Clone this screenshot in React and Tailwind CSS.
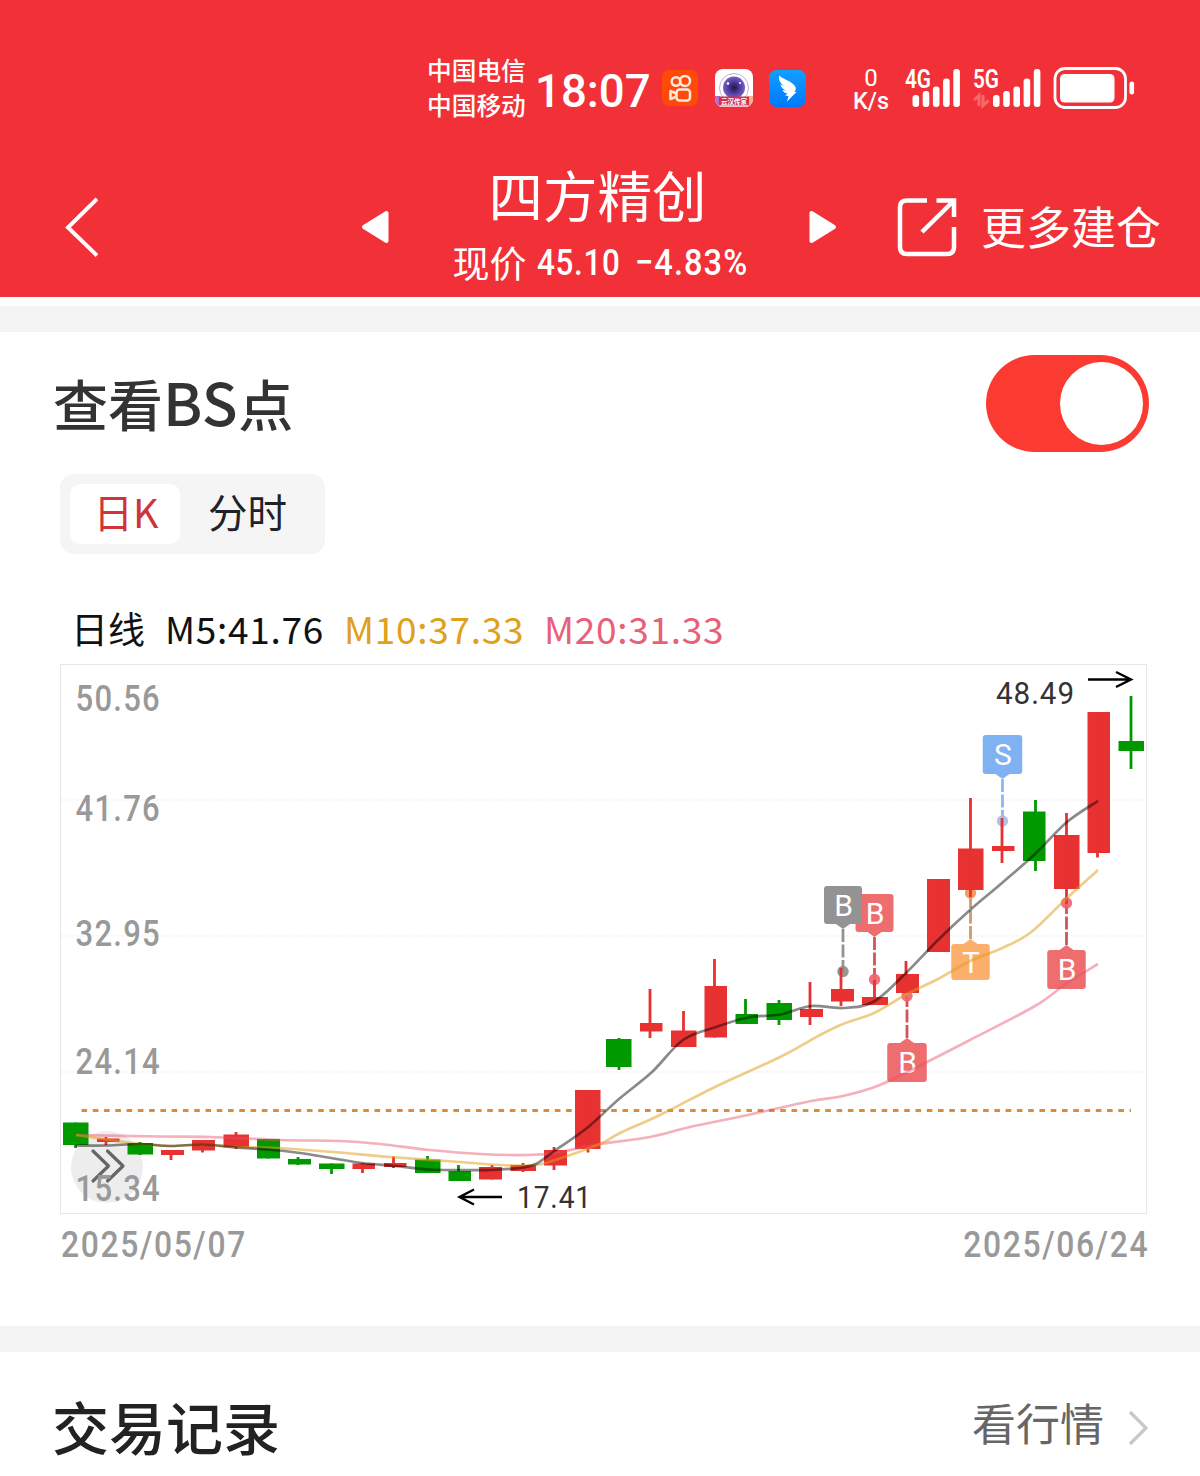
import clsx from "clsx";

const RED = "#e83131";
const GREEN = "#009a00";

// [body left, body width, open/close top, open/close bottom, high, low, wick x, up]
const candles = [
  [63, 25.5, 1122.5, 1145, 1122.5, 1148, 75.5, false],
  [97, 22.5, 1138.5, 1142, 1137, 1145, 106, true],
  [127.5, 25.5, 1143, 1154.5, 1142, 1155, 140, false],
  [161, 23, 1150, 1155, 1150, 1160, 171, true],
  [192, 23, 1140, 1150.5, 1140, 1152.5, 202.5, true],
  [223.5, 25.5, 1134.5, 1147, 1132, 1149, 236, true],
  [257, 23, 1139, 1158.5, 1139, 1158.5, 268, false],
  [288, 23, 1159, 1164.5, 1157, 1165, 298, false],
  [319, 25.5, 1163.5, 1169, 1163.5, 1174, 331.5, false],
  [352.5, 22.5, 1163.5, 1169, 1163, 1173, 362.5, true],
  [384, 22.5, 1163, 1167, 1156.5, 1168, 393.5, true],
  [415, 25.5, 1159.5, 1173, 1156, 1173, 427.5, false],
  [448.5, 22.5, 1171, 1181, 1165, 1181, 458.5, false],
  [479, 23, 1167, 1179.5, 1165, 1179.5, 492, true],
  [510.5, 25.5, 1165, 1171, 1163, 1172, 523, true],
  [544, 23, 1150, 1165.5, 1147, 1170, 554, true],
  [575, 25.5, 1090, 1149, 1090, 1152.5, 588, true],
  [606, 25.5, 1039, 1067, 1038, 1070, 619, false],
  [640, 22.5, 1023, 1031.5, 989, 1038, 650, true],
  [671, 25.5, 1030.5, 1047, 1011, 1047, 683.5, true],
  [704.5, 22.5, 986, 1037.5, 959, 1037.5, 714.5, true],
  [735.5, 22.5, 1014, 1024, 999, 1024, 745.5, false],
  [766.5, 25.5, 1003, 1020, 1000, 1025, 779, false],
  [800, 23, 1009, 1017, 982, 1025, 810, true],
  [831, 23, 989, 1001.5, 968, 1006, 841, true],
  [862, 26, 997, 1005, 980, 1005, 874.5, true],
  [896, 23, 974, 993, 961, 993, 906, true],
  [927, 23, 879, 952, 879, 952, 938, true],
  [958, 25.5, 848.5, 890, 798, 897, 970.5, true],
  [992, 22.5, 846, 851, 818, 863, 1002, true],
  [1023, 22.5, 811.5, 861, 800, 871, 1035.5, false],
  [1054, 25.5, 835, 889, 813, 904, 1066.5, true],
  [1087.5, 22.5, 712, 853, 712, 857.5, 1097.5, true],
  [1118.5, 25.5, 741, 751, 696, 769, 1131, false],
];

const ma5 = [
  [76, 1145.5], [107, 1145.5], [140, 1144], [171, 1146], [203, 1144.5], [236, 1147.5],
  [268, 1149.5], [300, 1153], [331, 1158], [362, 1163], [395, 1166], [428, 1169.5],
  [460, 1170], [492, 1170], [523, 1167.5], [537, 1163.5], [555, 1150.5], [587, 1128],
  [619, 1099], [652, 1072], [683, 1040], [716, 1027], [748, 1017.5], [780, 1014.5],
  [811, 1006], [843, 1008], [874, 1001.5], [907, 972], [938, 940], [970, 910],
  [1002, 883], [1035, 854], [1067, 822], [1098, 801],
];

const ma10 = [
  [76, 1135], [107, 1139.5], [140, 1144], [171, 1146], [203, 1144.5], [236, 1147],
  [268, 1147.5], [300, 1149.5], [340, 1152.5], [390, 1157], [460, 1162], [500, 1165],
  [535, 1165], [555, 1160], [600, 1144], [620, 1133], [660, 1115], [715, 1087],
  [780, 1057], [820, 1035], [843, 1024], [874, 1013], [907, 994], [938, 979],
  [970, 961], [1000, 949], [1030, 933], [1067, 898], [1098, 870],
];

const ma20 = [
  [76, 1135], [160, 1136.5], [210, 1137], [280, 1140], [340, 1141], [380, 1144],
  [430, 1150], [480, 1154], [525, 1155], [555, 1153], [600, 1144], [650, 1137],
  [690, 1127], [748, 1115], [811, 1101], [843, 1096], [880, 1085], [927, 1062],
  [970, 1040], [1035, 1006], [1067, 983], [1098, 964],
];

const pins = [
  { x: 874.5, top: 894, w: 38, h: 38, dot: 979.5, label: "B", color: "#ee6d6f", stem: "#d0555a", dotColor: "#f0606a" },
  { x: 843, top: 886, w: 38, h: 38, dot: 971.5, label: "B", color: "#939393", stem: "#939393", dotColor: "#8c8c8c" },
  { x: 907, top: 1043, w: 39.5, h: 39, dot: 996, label: "B", color: "#ee6d6f", stem: "#d0555a", dotColor: "#f0606a" },
  { x: 970.5, top: 944, w: 38.5, h: 36, dot: 893, label: "T", color: "#fcae6b", stem: "#cf9a70", dotColor: "#f5924c" },
  { x: 1066.5, top: 950, w: 38.5, h: 39, dot: 903, label: "B", color: "#ee6d6f", stem: "#d0555a", dotColor: "#f0606a" },
  { x: 1002.5, top: 735, w: 39.5, h: 39, dot: 821, label: "S", color: "#7fb2f2", stem: "#8cb8ee", dotColor: "#a4bde9" },
];

const smooth = (pts) => {
  let d = `M${pts[0][0]} ${pts[0][1]}`;
  for (let i = 0; i < pts.length - 1; i++) {
    const p0 = pts[i - 1] || pts[i];
    const p1 = pts[i];
    const p2 = pts[i + 1];
    const p3 = pts[i + 2] || p2;
    d += ` C${p1[0] + (p2[0] - p0[0]) / 6} ${p1[1] + (p2[1] - p0[1]) / 6} ${
      p2[0] - (p3[0] - p1[0]) / 6
    } ${p2[1] - (p3[1] - p1[1]) / 6} ${p2[0]} ${p2[1]}`;
  }
  return d;
};

const Pin = ({ x, top, w, h, dot, label, color, stem, dotColor }) => {
  const below = dot < top;
  const edge = below ? top : top + h;
  const tip = below ? top - 5 : top + h + 5;
  return (
    <g>
      <line x1={x} x2={x} y1={tip} y2={dot} stroke={stem} strokeWidth="2.8" strokeDasharray="13 2.5" />
      <circle cx={x} cy={dot} r="5.7" fill={dotColor} opacity="0.9" />
      <path d={`M${x - 7} ${edge}L${x} ${tip}L${x + 7} ${edge}Z`} fill={color} />
      <rect x={x - w / 2} y={top} width={w} height={h} rx="3" fill={color} />
      <text
        x={x + 0.5}
        y={top + h / 2 + 10.5}
        textAnchor="middle"
        fontSize="30"
        fill="#fff"
        className="font-['Roboto',sans-serif]"
      >
        {label}
      </text>
    </g>
  );
};

const Chart = () => (
  <svg viewBox="60 664 1088 551" className="block w-[1088px] h-[551px]">
    <rect x="60.5" y="664.5" width="1086" height="549" fill="#fff" stroke="#e6e6e6" />
    {[800, 936, 1072].map((y) => (
      <line key={y} x1="61" x2="1146" y1={y} y2={y} stroke="#f5f5f5" strokeWidth="1.5" strokeDasharray="3 2" />
    ))}
    <circle cx="107" cy="1167" r="36" fill="#ededed" />
    <line x1="81.5" x2="1131" y1="1110.5" y2="1110.5" stroke="#dc8b3c" strokeWidth="3" strokeDasharray="5.6 5.67" />

    {pins.map((pin) => (
      <Pin key={pin.x} {...pin} />
    ))}

    {candles.map(([x, w, top, bottom, high, low, cx, up], i) => (
      <g key={i} fill={up ? RED : GREEN}>
        <rect x={x} y={top} width={w} height={bottom - top} />
        <rect x={cx - 1.4} y={high} width="2.8" height={low - high} />
      </g>
    ))}

    <g fill="none" strokeWidth="2.7">
      <path d={smooth(ma20)} stroke="#e8506a" strokeOpacity="0.45" />
      <path d={smooth(ma10)} stroke="#dfa01c" strokeOpacity="0.52" />
      <path d={smooth(ma5)} stroke="#000" strokeOpacity="0.46" />
    </g>

    <g fill="none" stroke="#666" strokeWidth="3.2" strokeLinecap="round" strokeLinejoin="round">
      <path d="M93 1151L108.500 1166L93 1181" />
      <path d="M107.500 1151L123 1166L107.500 1181" />
    </g>

    <g fill="#999" fontSize="37" fontWeight="500" letterSpacing="1.5" className="font-['Roboto',sans-serif]">
      {[
        ["50.56", 711],
        ["41.76", 821],
        ["32.95", 946],
        ["24.14", 1074],
        ["15.34", 1201],
      ].map(([label, y]) => (
        <text key={label} x="75.5" y={y} textLength="85.500" lengthAdjust="spacingAndGlyphs">
          {label}
        </text>
      ))}
    </g>

    <g fill="#333" fontSize="32" letterSpacing="1" className="font-['Roboto',sans-serif]">
      <text x="996" y="704" textLength="79" lengthAdjust="spacingAndGlyphs">48.49</text>
      <text x="517" y="1208" textLength="75" lengthAdjust="spacingAndGlyphs">17.41</text>
    </g>
    <g fill="none" stroke="#000" strokeWidth="2.4">
      <path d="M1088 679.500H1130M1116 672L1131 679.500L1116 687" />
      <path d="M502 1197H460M474 1189.500L459.500 1197L474 1204.500" />
    </g>
  </svg>
);

const Signal = ({ label, data }) => (
  <svg viewBox="0 0 70 44" className="w-[70px] h-11">
    <text
      x="0"
      y="22"
      fontSize="25"
      fontWeight="600"
      fill="#fff"
      textLength="26"
      lengthAdjust="spacingAndGlyphs"
      className="font-['Roboto',sans-serif]"
    >
      {label}
    </text>
    {[12, 16, 20.5, 28.5, 38].map((h, i) => (
      <rect key={h} x={(data ? 20 : 7.5) + i * 10.2} y={41 - h} width="6.6" height={h} rx="3" fill="#fff" />
    ))}
    {data && (
      <path d="M1 34L6 29.500V40M10 29V39.500L15.500 34.500" fill="none" stroke="#fa6a6c" strokeWidth="3" />
    )}
  </svg>
);

const StatusBar = () => (
  <div className="flex h-[140px] pl-[427px] pt-[54px] text-white">
    <div className="-mt-0.5 w-[99px] text-[24.7px] leading-[35px] font-medium whitespace-nowrap">
      <div>中国电信</div>
      <div>中国移动</div>
    </div>
    <div className="ml-[9px] w-[118px] h-[72px] text-[47px] leading-[73px] font-medium font-['Roboto',sans-serif] whitespace-nowrap">
      <span className="block origin-left scale-x-[0.97]">18:07</span>
    </div>

    <svg viewBox="0 0 36 36" className="ml-[9px] mt-4 size-9">
      <rect width="36" height="36" rx="7" fill="#ff4a08" />
      <g fill="none" stroke="#ffe9dc" strokeWidth="2.500">
        <circle cx="14" cy="11.500" r="4.300" />
        <circle cx="23" cy="11" r="5" />
        <rect x="14.500" y="19.500" width="13.500" height="11" rx="3" />
        <path d="M14.500 23.500L8.500 21V29L14.500 26.500" strokeLinejoin="round" />
      </g>
    </svg>

    <svg viewBox="0 0 38 38" className="ml-[17px] mt-[15px] size-[38px]">
      <defs>
        <clipPath id="camera">
          <rect width="38" height="38" rx="8" />
        </clipPath>
        <radialGradient id="lens">
          <stop offset="0" stopColor="#1c1746" />
          <stop offset="0.500" stopColor="#4a3a9c" />
          <stop offset="1" stopColor="#7a5fc4" />
        </radialGradient>
      </defs>
      <g clipPath="url(#camera)">
        <rect width="38" height="38" fill="#fff" />
        <circle cx="19" cy="19" r="14.500" fill="none" stroke="#b9b4d4" strokeWidth="1" />
        <circle cx="19" cy="18.500" r="11" fill="url(#lens)" />
        <circle cx="13" cy="14.500" r="1.300" fill="#fff" />
        <circle cx="25" cy="14" r="1" fill="#fff" />
        <rect y="27" width="5" height="11" fill="#b070c8" />
        <rect x="33" y="27" width="5" height="11" fill="#f3b08c" />
        <rect x="4" y="27.500" width="30" height="9" fill="#d52d50" />
        <rect y="36.500" width="38" height="1.500" fill="#f3c4cc" />
        <text x="19" y="34.500" fontSize="6.500" fontWeight="700" textAnchor="middle" fill="#fff">
          云汉传家
        </text>
      </g>
    </svg>

    <svg viewBox="0 0 37 37" className="ml-4 mt-4 size-[37px]">
      <defs>
        <linearGradient id="wing" x2="0" y2="1">
          <stop offset="0" stopColor="#12a0ff" />
          <stop offset="1" stopColor="#0078fe" />
        </linearGradient>
      </defs>
      <rect width="37" height="37" rx="7.500" fill="url(#wing)" />
      <path
        d="M10 5.500C14 9 22 11 25.500 15.500C27.500 18 27 20 25.500 22H27.500L18 31.500L19.500 26L16 25.500L18.500 23.500C15.500 23 14 21.500 13.500 20L17 20.500C13.500 19 12 17 11.500 14.500L15 16C11 13 9.500 10 10 5.500Z"
        fill="#fff"
      />
    </svg>

    <div className="ml-[45px] mt-[12px] w-10 text-center text-[24px] leading-[24px] font-['Roboto',sans-serif]">
      <div className="h-[23px]">0</div>
      <div className="text-[23.5px] font-medium">K/s</div>
    </div>
    <div className="ml-[14px] mt-3 flex">
      <div className="w-[68px]">
        <Signal label="4G" />
      </div>
      <Signal label="5G" data />
    </div>

    <svg viewBox="0 0 82 42" className="ml-[10px] mt-[13px] w-[82px] h-[42px]">
      <rect x="2" y="1.500" width="70.500" height="39" rx="10" fill="none" stroke="#fff" strokeWidth="2.800" />
      <rect x="7" y="7" width="54.500" height="28.500" rx="4.500" fill="#fff" />
      <rect x="76.500" y="14.500" width="4.600" height="13" rx="2.300" fill="#fff" />
    </svg>
  </div>
);

const Header = () => (
  <header className="h-[297px] bg-[#f23038]">
    <StatusBar />
    <div className="flex h-[157px] text-white">
      <svg viewBox="0 0 34 60" className="ml-16 mt-[57px] w-[34px] h-[60px]">
        <path d="M33 2L4 30.500L33 58.500" fill="none" stroke="#fff" strokeWidth="4" />
      </svg>
      <svg viewBox="0 0 28 34" className="ml-[263px] mt-[70px] w-7 h-[34px]">
        <path d="M3 17L25.500 3V31Z" fill="#fff" stroke="#fff" strokeWidth="4" strokeLinejoin="round" />
      </svg>
      <div className="ml-[51px] w-[320px] pt-[22px] text-center whitespace-nowrap">
        <div className="pr-[5px] text-[54.5px] leading-[64px]">四方精创</div>
        <div className="mt-[9px] flex items-center justify-center text-[37px] leading-[50px]">
          <span>现价</span>
          <span className="ml-2.5 w-[84px]">
            <span className="block origin-left scale-x-[0.85] pt-[3px] text-left font-medium tracking-[0.8px] font-['Roboto',sans-serif]">
              45.10
            </span>
          </span>
          <span className="ml-3.5 w-[113px]">
            <span className="block origin-left scale-x-[0.88] pt-[3px] text-left font-medium tracking-[1.2px] font-['Roboto',sans-serif]">
              −4.83%
            </span>
          </span>
        </div>
      </div>
      <svg viewBox="0 0 28 34" className="ml-[49px] mt-[70px] w-7 h-[34px]">
        <path d="M25 17L2.500 3V31Z" fill="#fff" stroke="#fff" strokeWidth="4" strokeLinejoin="round" />
      </svg>
      <svg viewBox="0 0 60 60" className="ml-[60px] mt-[57px] size-[60px]">
        <g fill="none" stroke="#fff" strokeWidth="4.500">
          <path d="M30 3.500H10Q3 3.500 3 10V50Q3 57 10 57H50Q57 57 57 50V30" />
          <path d="M39.500 3.500H57V20M57 3.500L25 35" />
        </g>
      </svg>
      <div className="ml-6 mt-[54px] text-[45px] leading-[64px] whitespace-nowrap">更多建仓</div>
    </div>
  </header>
);

const Tabs = () => (
  <div className="ml-[60px] mt-[22px] flex h-20 w-[265px] rounded-[14px] bg-[#f5f5f5] p-2.5 text-[39.5px] leading-[53px]">
    {["日K", "分时"].map((tab, i) => (
      <div
        key={tab}
        className={clsx(
          "h-[60px] rounded-[10px] text-center whitespace-nowrap",
          i === 0 ? "w-[110px] bg-white pl-0.5 text-[#d13438]" : "w-[135px] text-[#1f2329]"
        )}
      >
        {tab}
      </div>
    ))}
  </div>
);

const App = () => (
  <div className="h-[1476px] w-[1200px] overflow-hidden bg-white font-['Noto_Sans_CJK_SC',sans-serif]">
    <Header />
    <div className="mt-[9px] h-[26px] bg-[#f4f4f4]" />

    <div className="flex h-[120px] justify-between pl-[53px] pr-[51px] pt-[22px]">
      <h1 className="text-[55px] leading-[94px] font-medium text-[#333] whitespace-nowrap">
        查看<span className="text-[59px] tracking-[0.5px]">BS</span>点
      </h1>
      <div className="mt-px flex h-[97px] w-[163px] items-center justify-end rounded-full bg-[#fb3b32] pr-1.5">
        <div className="size-[83px] rounded-full bg-white" />
      </div>
    </div>
    <Tabs />

    <div className="ml-[71px] mt-[46px] flex h-16 text-[37px] leading-[57px] whitespace-nowrap">
      <span className="w-[94px] text-[#111]">日线</span>
      <span className="w-[179px] tracking-[0.7px] text-[#111]">M5:41.76</span>
      <span className="w-[200px] tracking-[0.7px] text-[#dfa01c]">M10:37.33</span>
      <span className="tracking-[0.7px] text-[#e8607a]">M20:31.33</span>
    </div>

    <div className="ml-[60px]">
      <Chart />
    </div>
    <div className="flex h-[111px] justify-between pl-[61px] pr-[53px] pt-[5px] text-[37px] leading-[50px] font-medium tracking-[1.9px] text-[#999] font-['Roboto',sans-serif]">
      <span className="origin-left scale-x-[0.86]">2025/05/07</span>
      <span className="-mr-0.5 origin-right scale-x-[0.86]">2025/06/24</span>
    </div>

    <div className="h-[26px] bg-[#f4f4f4]" />
    <div className="flex h-[124px] items-start pl-[52px] pr-[50px] text-[#222]">
      <h2 className="grow text-[57px] leading-[146px] font-medium">交易记录</h2>
      <span className="text-[44px] leading-[141px] text-[#666]">看行情</span>
      <svg viewBox="0 0 22 36" className="ml-6 mt-[58px] w-[22px] h-9">
        <path d="M2 2L18 18L2 34" fill="none" stroke="#c8c8c8" strokeWidth="3.200" />
      </svg>
    </div>
  </div>
);

export default App;
